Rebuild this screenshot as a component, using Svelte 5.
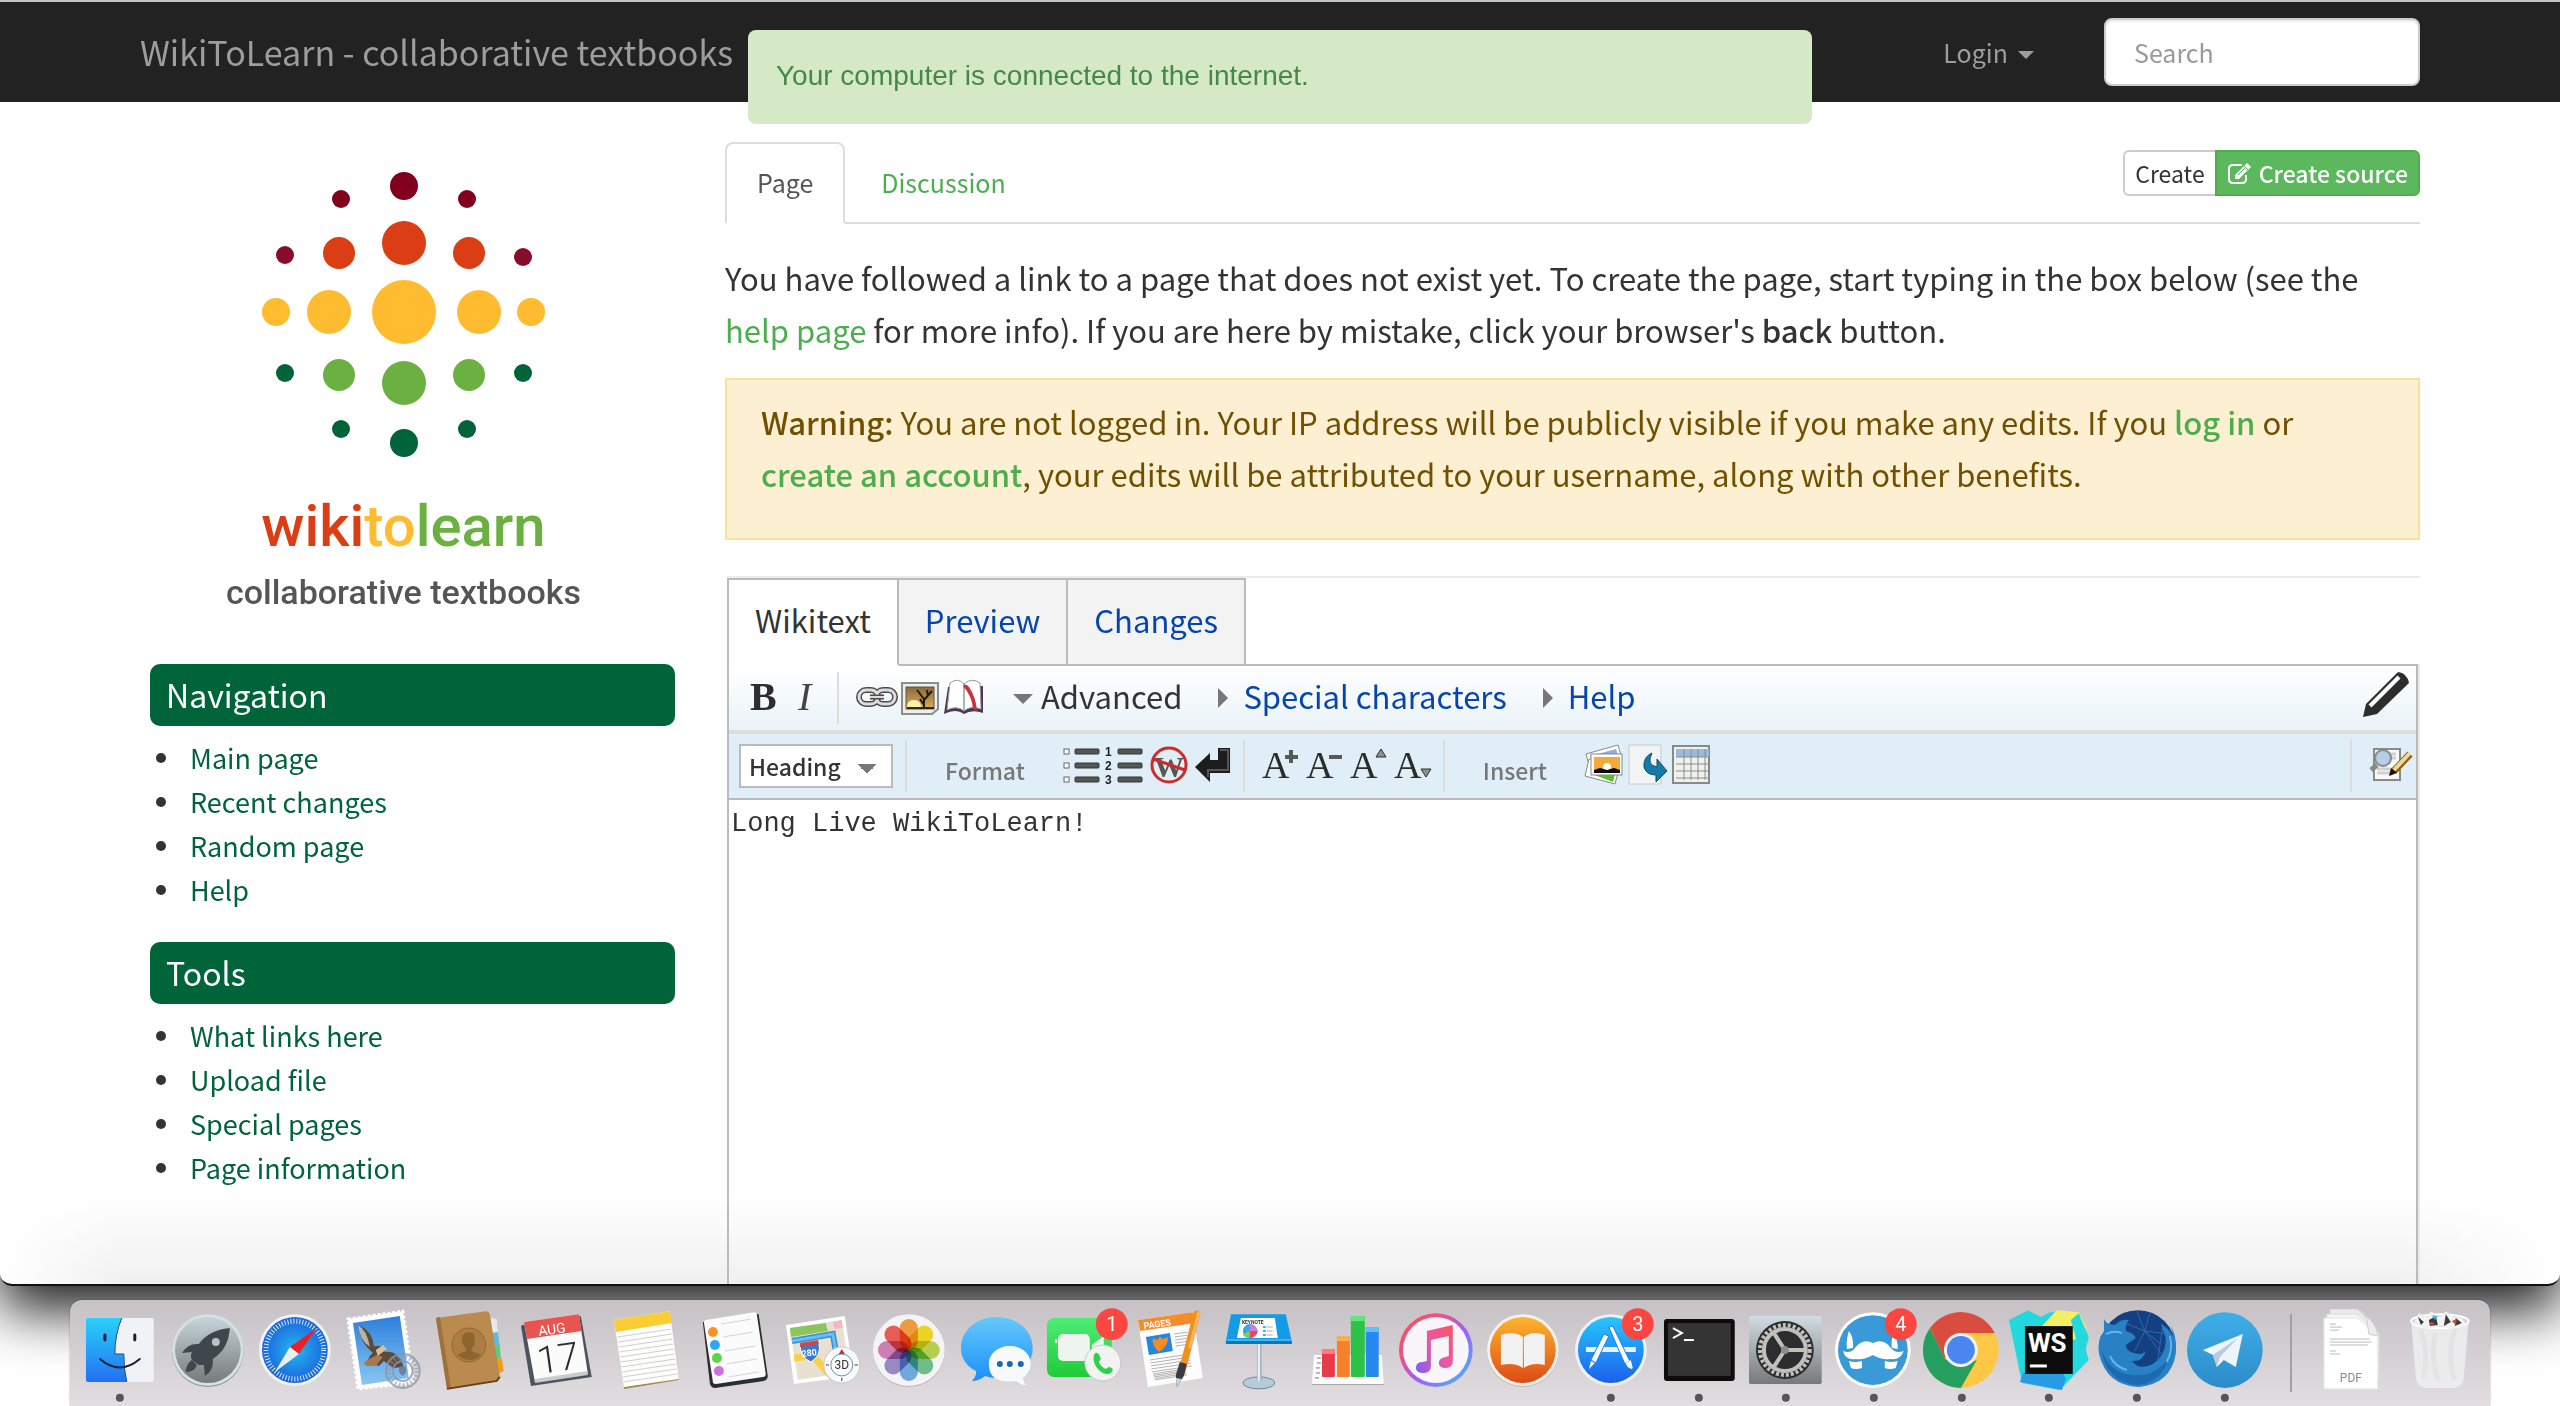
<script>
  const navLinks = ['Main page', 'Recent changes', 'Random page', 'Help'];
  const toolLinks = ['What links here', 'Upload file', 'Special pages', 'Page information'];

  const menus = [
    { title: 'Navigation', links: navLinks },
    { title: 'Tools', links: toolLinks }
  ];

  const dots = [
    { x: 403, y: 186, r: 14, c: '#80001d' },
    { x: 340, y: 199, r: 9, c: '#80001d' },
    { x: 466, y: 199, r: 9, c: '#80001d' },
    { x: 284, y: 255, r: 9, c: '#8a0c2b' },
    { x: 522, y: 257, r: 9, c: '#8a0c2b' },
    { x: 403, y: 243, r: 22, c: '#db3d14' },
    { x: 338, y: 253, r: 16, c: '#db3d14' },
    { x: 468, y: 253, r: 16, c: '#db3d14' },
    { x: 403, y: 312, r: 32, c: '#ffbc30' },
    { x: 328, y: 312, r: 22, c: '#ffbc30' },
    { x: 478, y: 312, r: 22, c: '#ffbc30' },
    { x: 275, y: 312, r: 14, c: '#ffbc30' },
    { x: 530, y: 312, r: 14, c: '#ffbc30' },
    { x: 403, y: 383, r: 22, c: '#6bb141' },
    { x: 338, y: 375, r: 16, c: '#6bb141' },
    { x: 468, y: 375, r: 16, c: '#6bb141' },
    { x: 284, y: 373, r: 9, c: '#00643b' },
    { x: 522, y: 373, r: 9, c: '#00643b' },
    { x: 340, y: 429, r: 9, c: '#00643b' },
    { x: 466, y: 429, r: 9, c: '#00643b' },
    { x: 403, y: 443, r: 14, c: '#00643b' }
  ];

  const petals = ['#f7931e', '#f5d800', '#b5d334', '#5cbf7b', '#5aa5e0', '#8d7cc3', '#cd6fae', '#f0453a'];

  let search = $state('');
  let wikitext = $state('Long Live WikiToLearn!');
</script>

{#snippet app(name, icon, running = false, badge = '')}
  <button class="app" aria-label={name}>
    <svg viewBox="0 0 88 106">
      {@render icon()}
      {#if badge}
        <circle cx="71" cy="24" r="16" fill="#fb4642" />
        <text x="71" y="31" font-size="20" fill="#fff" text-anchor="middle">{badge}</text>
      {/if}
      {#if running}
        <circle cx="44" cy="98" r="4" fill="#57545a" />
      {/if}
    </svg>
  </button>
{/snippet}

{#snippet finder()}
  <rect x="10" y="18" width="68" height="64" rx="2" fill="#f1f2f6" />
  <path d="M12 18H46Q39 34 39 54H48Q48 70 51 82H12a2 2 0 0 1-2-2V20a2 2 0 0 1 2-2z" fill="url(#finderBlue)" />
  <path d="M46 18Q39 34 39 54H48Q48 70 51 82" fill="none" stroke="#1a4f8c" stroke-width="1" />
  <path d="M29 35v5M59 35v5" stroke="#152238" stroke-width="3" stroke-linecap="round" />
  <path d="M24 59Q44 76 64 59" fill="none" stroke="#152238" stroke-width="2" stroke-linecap="round" />
{/snippet}

{#snippet launchpad()}
  <circle cx="44" cy="51" r="36" fill="#8b8e8e" />
  <circle cx="44" cy="50" r="36" fill="#d3e1e5" />
  <circle cx="44" cy="50" r="33" fill="url(#rocketBg)" />
  <path d="M66 28Q45 30 35 44Q24 43 18 53L28 52Q26 56 28 60L35 65L40 65L41 76Q50 71 49 59Q65 49 66 28z" fill="#3f464c" />
  <circle cx="52" cy="42" r="4" fill="#b7c2c6" />
  <path d="M28 60Q22 64 22 72Q31 72 33 65z" fill="#3f464c" />
{/snippet}

{#snippet safari()}
  <circle cx="44" cy="50" r="36" fill="#f2f3f5" />
  <circle cx="44" cy="50" r="33" fill="url(#safariBlue)" />
  <circle cx="44" cy="50" r="29" fill="none" stroke="#d9ecfb" stroke-width="5" stroke-dasharray="1 2" />
  <path d="M66 28L39 47l9 7z" fill="#e92029" />
  <path d="M24 72l15-25 9 7z" fill="#eceff2" />
{/snippet}

{#snippet mail()}
  <path d="M9 19l55-8 11 72-56 6z" fill="#fff" stroke="#fff" stroke-width="3" stroke-dasharray="3 2" />
  <path d="M14 23l47-7 9 62-47 7z" fill="url(#mailSky)" />
  <path d="M19 25Q33 30 35 46L43 46L46 52Q60 50 65 67L54 68L45 61L40 66L28 62L31 56L34 53Q21 43 19 25z" fill="#5e4a3b" />
  <path d="M19 25Q28 30 31 47Q21 41 19 25z" fill="#b9b2aa" />
  <path d="M25 62l13-7 6 2-7 9-10 0z" fill="#a77a4e" />
  <path d="M37 50l7-5 4 4-9 7z" fill="#d9bd9c" />
  <circle cx="64" cy="71" r="17" fill="none" stroke="#8c97a8" stroke-width="2" opacity=".8" />
  <circle cx="64" cy="71" r="10" fill="none" stroke="#8c97a8" stroke-width="2" opacity=".8" />
  <circle cx="64" cy="71" r="14" fill="none" stroke="#8c97a8" stroke-width="4" stroke-dasharray="2 2" opacity=".6" />
  <path d="M61 67q3-2 6 0q2 5-3 9q-6-4-3-9z" fill="#71809a" />
{/snippet}

{#snippet contacts()}
  <path d="M64 18l6 1 1 14-5 1z" fill="#e7e9ea" />
  <path d="M65 33l6-1 2 13-6 1z" fill="#63b8de" />
  <path d="M67 46l6-1 1 13-6 1z" fill="#55cf7b" />
  <path d="M69 59l6-1 2 13-6 3z" fill="#eb9f1d" />
  <path d="M9 18l50-7q3 0 4 3l10 62q0 4-3 5l-48 8q-2 0-2-2z" fill="#ba8a4f" />
  <path d="M9 18l4-1 11 71-4 1z" fill="#9d713b" />
  <path d="M20 89l50-8 3-4" fill="none" stroke="#654018" stroke-width="2" />
  <circle cx="42" cy="45" r="17" fill="#ab7d43" stroke="#926833" stroke-width="1" />
  <path d="M42 32q6 0 6 7t-3 9v3l9 4q-10 10-24 0l9-4v-3q-4-3-4-9t7-7z" fill="#8f652f" />
{/snippet}

{#snippet calendar()}
  <path d="M6 26l6-3 54-7 11 61-61 9z" fill="#4b545e" />
  <path d="M9 22l55-8 9 59-53 9z" fill="#fbfbfb" />
  <path d="M9 22l55-8 3 17-55 8z" fill="#e85450" />
  <path d="M20 79l53-8v4l-53 8z" fill="#c9cccf" />
  <text x="24" y="36" font-size="14" fill="#fff" transform="rotate(-8 24 36)">AUG</text>
  <text x="24" y="74" font-size="38" font-weight="300" fill="#2c2c2c" transform="rotate(-8 24 74)">17</text>
{/snippet}

{#snippet notes()}
  <path d="M22 87l55-9v2l-55 9z" fill="#9e8a4a" />
  <path d="M12 20l56-9 9 68-55 8z" fill="#fdfdfb" />
  <path d="M12 20l56-9 2 12-56 9z" fill="#fbcd34" />
  {#each [37, 42, 47, 52, 57, 62, 67, 72, 77, 82] as y}
    <path d="M{10 + y / 7} {y}l54-8" stroke="#cfcfcf" stroke-width="1" />
  {/each}
{/snippet}

{#snippet reminders()}
  <path d="M14 23l54-8 9 61q0 3-3 4l-49 7q-3 0-4-3z" fill="#2b2e32" stroke="#2b2e32" stroke-width="2" />
  <path d="M16 20l48-8q3 0 3 2l9 60q0 3-3 3l-47 7q-3 0-3-2l-9-59q0-3 2-3z" fill="#fbfbfb" />
  <circle cx="23" cy="32" r="5" fill="#fc9226" />
  <circle cx="25" cy="45" r="5" fill="#29a8f5" />
  <circle cx="27" cy="58" r="5" fill="#5fd441" />
  <circle cx="29" cy="71" r="5" fill="#cb71e0" />
  <path d="M31 24l30-5M33 37l30-5M35 51l30-5M37 64l30-5M39 77l30-5" stroke="#d4d4d6" stroke-width="1" />
{/snippet}

{#snippet maps()}
  <path d="M8 25l59-9 9 60-60 8z" fill="#fff" />
  <path d="M12 28l52-8 8 52-52 8z" fill="#e8e0d0" />
  <path d="M12 28l36-5 2 8-37 6z" fill="#8ac65c" />
  <path d="M55 22l9-2 1 8-8 1z" fill="#efb8c3" />
  <path d="M14 41l41-7 8 45" fill="none" stroke="#3b8fd0" stroke-width="6" />
  <path d="M14 41l41-7 8 45" fill="none" stroke="#65c1f5" stroke-width="3" />
  <path d="M16 58l19-2 20 22" fill="none" stroke="#f9d046" stroke-width="7" />
  <path d="M22 45l19-3q3 14-8 20-10-4-11-17z" fill="#3b79cf" stroke="#fff" stroke-width="1" />
  <path d="M22 47l19-3-1-4-18 3z" fill="#d34549" />
  <text x="24" y="57" font-size="9" font-weight="700" fill="#fff" transform="rotate(-7 24 57)">280</text>
  <circle cx="64" cy="65" r="18" fill="#fafafa" stroke="#c9c9c9" stroke-width="1" />
  <circle cx="64" cy="65" r="11" fill="none" stroke="#5d9ab6" stroke-width="1" />
  <path d="M64 49l3 5h-6z" fill="#de2a1f" />
  <path d="M64 78v3M48 65h3M77 65h3" stroke="#333" stroke-width="1" />
  <text x="64" y="69" font-size="12" fill="#333" text-anchor="middle">3D</text>
{/snippet}

{#snippet photos()}
  <circle cx="44" cy="51" r="36" fill="#b9b6b8" />
  <circle cx="44" cy="50" r="36" fill="#f4f3f5" />
  {#each petals as color, i}
    <rect class="petal" x="35" y="19" width="18" height="31" rx="9" fill={color} opacity=".85" transform="rotate({i * 45} 44 50)" />
  {/each}
{/snippet}

{#snippet messages()}
  <path d="M44 17c20 0 36 13 36 31S64 78 44 78q-7 0-12-2-6 5-13 5 5-5 4-10C13 66 8 58 8 48c0-18 16-31 36-31z" fill="url(#msgBlue)" />
  <path d="M57 46c12 0 21 8 21 18q0 8-8 14 1 4 3 7-6 0-9-4-28 4-28-17c0-10 9-18 21-18z" fill="#f7f9fb" />
  <circle cx="47" cy="64" r="3" fill="#1769ae" />
  <circle cx="57" cy="64" r="3" fill="#1769ae" />
  <circle cx="68" cy="64" r="3" fill="#1769ae" />
{/snippet}

{#snippet facetime()}
  <rect x="6" y="18" width="65" height="59" rx="7" fill="url(#ftGreen)" />
  <rect x="17" y="34" width="32" height="27" rx="5" fill="#eef4ee" />
  <path d="M51 45l12-9v23l-12-8z" fill="#eef4ee" />
  <path d="M15 39v4" stroke="#eef4ee" stroke-width="2" />
  <circle cx="62" cy="63" r="18" fill="#f0f3ef" stroke="#c5ccc5" stroke-width="1" />
  <path d="M53 55q3-5 6 1l1 3-2 3q2 5 7 7l3-2q6 1 3 5-5 5-12-1-8-7-6-16z" fill="#30cf4e" />
{/snippet}

{#snippet pages()}
  <path d="M10 20l55-8 10 66-55 9z" fill="#fdfdfd" />
  <path d="M10 20l55-8 2 11-55 8z" fill="#f68b29" />
  <text x="16" y="29" font-size="9" font-weight="700" fill="#fff" transform="rotate(-8 16 29)">PAGES</text>
  <path d="M18 37l24-4 3 18-24 4z" fill="#2487dd" />
  <path d="M31 52q-8-7-6-14l4 2 3-3 3 2 5-2q1 9-9 15z" fill="#f78b20" />
  {#each [0, 3, 6, 9, 12] as y}
    <path d="M{46 + y / 6} {34 + y}l14-2M{22 + y / 6} {60 + y}l40-6M{25 + y / 6} {74 + y / 2}l32-5" stroke="#b4b4b4" stroke-width="1" />
  {/each}
  <path d="M69 14L54 72" stroke="#f0901f" stroke-width="7" stroke-linecap="round" />
  <path d="M71 13L62 47" stroke="#f9b65f" stroke-width="3" stroke-linecap="round" />
  <path d="M59 64l-7-2-4 13 1 12 7-11z" fill="#3a3c40" />
  <path d="M48 78l1 9 5-8z" fill="#c4d5df" />
{/snippet}

{#snippet keynote()}
  <ellipse cx="43" cy="83" rx="16" ry="6" fill="#b8cbdb" stroke="#6f8698" stroke-width="1" />
  <path d="M41 44h5v37h-5z" fill="#a9bac8" />
  <path d="M42 44h2v37h-2z" fill="#edf3f7" />
  <path d="M15 14h55l6 27v3H10v-3z" fill="#149be8" />
  <path d="M10 41h66v3H10z" fill="#0b76b9" />
  <path d="M11 40h64" stroke="#6dd6fa" stroke-width="1" />
  <path d="M25 18h34l3 20H21z" fill="#fff" />
  <text x="26" y="24" font-size="5" font-weight="700" fill="#333">KEYNOTE</text>
  <circle cx="34" cy="31" r="7" fill="#34a6e8" />
  <path d="M34 31v-7q6 0 8 7z" fill="#c77ddb" />
  <path d="M34 31h8q-1 6-8 7z" fill="#ef445c" />
  <path d="M34 31v7q-6 0-7-4z" fill="#7fce50" />
  <path d="M47 27h3M47 31h3M47 35h3" stroke="#44b6c6" stroke-width="2" />
  <path d="M51 27h6M51 31h6M51 35h6" stroke="#d6d6d6" stroke-width="2" />
{/snippet}

{#snippet numbers()}
  <path d="M10 55h68l2 29H8z" fill="#fcfcfc" />
  <path d="M8 84h72v1H8z" fill="#aaa" />
  <path d="M13 58h4M13 63h4M12 68h4M12 73h4M11 78h4" stroke="#777" stroke-width="1" />
  <rect x="18" y="49" width="13" height="28" rx="1" fill="#e83a4d" />
  <rect x="18" y="49" width="13" height="5" fill="#fb7d80" />
  <rect x="33" y="36" width="13" height="41" rx="1" fill="#f5812a" />
  <rect x="33" y="36" width="13" height="5" fill="#fcae51" />
  <rect x="47" y="16" width="14" height="61" rx="1" fill="#2cc246" />
  <rect x="47" y="16" width="14" height="5" fill="#62e57f" />
  <rect x="62" y="27" width="13" height="50" rx="1" fill="#2589ef" />
  <rect x="62" y="27" width="13" height="5" fill="#5ec2fb" />
{/snippet}

{#snippet itunes()}
  <circle cx="44" cy="50" r="37" fill="url(#tunesRing)" />
  <circle cx="44" cy="50" r="33" fill="#f8f6fa" />
  <path d="M35 31l26-6v36q0 7-7 7-7 0-7-5 0-5 7-6l3-1V36l-18 4v26q0 7-7 7-8 0-8-5 0-6 7-6l4-1z" fill="url(#tunesNote)" />
{/snippet}

{#snippet ibooks()}
  <circle cx="44" cy="51" r="36" fill="#c6b6ae" />
  <circle cx="44" cy="50" r="36" fill="#f3f1f0" />
  <circle cx="44" cy="50" r="33" fill="url(#booksBg)" />
  <path d="M22 35q13-5 22 2v31q-8-6-22-3zM66 35q-13-5-21 2v31q8-6 21-3z" fill="#f2f2f3" />
{/snippet}

{#snippet appstore()}
  <circle cx="44" cy="50" r="36" fill="#eef2f6" />
  <circle cx="44" cy="50" r="33" fill="url(#storeBlue)" />
  <path d="M19 47h50v5H19z" fill="#eaf2fb" />
  <path d="M42 27l4-1 17 35-5 3z" fill="#f7fafd" stroke="#1c7df0" stroke-width="1" />
  <path d="M59 63l5-3 2 8-1 1q-5-1-6-6z" fill="#f7fafd" />
  <path d="M37 34l5 2-13 27-5-3z" fill="#f7fafd" stroke="#1c7df0" stroke-width="1" />
  <path d="M24 61l4 2-6 6z" fill="#f7fafd" />
{/snippet}

{#snippet terminal()}
  <rect x="9" y="19" width="71" height="62" rx="3" fill="#0c0c0c" />
  <rect x="13" y="23" width="63" height="53" fill="#343434" />
  <path d="M18 28l9 5-9 5" fill="none" stroke="#fff" stroke-width="2" />
  <path d="M29 40h10" stroke="#fff" stroke-width="2" />
{/snippet}

{#snippet preferences()}
  <rect x="7" y="16" width="73" height="68" rx="2" fill="url(#prefBg)" />
  <circle cx="43" cy="50" r="29" fill="#2c2d2e" />
  <circle cx="43" cy="50" r="25" fill="none" stroke="#c2c0bc" stroke-width="4" stroke-dasharray="3 2" />
  <circle cx="43" cy="50" r="21" fill="none" stroke="#c2c0bc" stroke-width="4" />
  <path d="M43 50h20M43 50L32 33M43 50L32 67" stroke="#c2c0bc" stroke-width="4" />
  <circle cx="43" cy="50" r="4" fill="#8e8c8a" />
{/snippet}

{#snippet franz()}
  <circle cx="43" cy="50" r="38" fill="#fff" />
  <circle cx="43" cy="50" r="35" fill="#3a9ad8" />
  <path d="M19 31q5 7 4 17l-6 1q-1-9 2-18zM64 33q4 7 4 16l-6-1q-1-8 2-15z" fill="#fff" />
  <path d="M13 51q8 3 12-3 8-10 18-5 11-5 18 5 5 6 13 3-4 10-14 8-9 1-17-4-8 5-17 4-10 2-13-8z" fill="#fff" />
  <path d="M19 61q6 2 13 0v7q-6 2-11 0zM55 61q6 2 13 0l-2 7q-6 2-11 0z" fill="#fff" />
{/snippet}

{#snippet chrome()}
  <circle cx="43" cy="50" r="38" fill="#fec846" />
  <path d="M12 28a38 38 0 0 1 65 5H43L27 59z" fill="#da4c40" />
  <path d="M12 28a38 38 0 0 0 31 60l16-28-16 7-16-8z" fill="#249f5d" />
  <circle cx="43" cy="50" r="17" fill="#f2f2f2" />
  <circle cx="43" cy="50" r="14" fill="#4b86f0" />
{/snippet}

{#snippet webstorm()}
  <path d="M4 20l19-10 13 7 9-5 28 0 11 26-3 11 3 11-25 26-4 4-38-7z" fill="#23d9dd" />
  <path d="M18 73h40l3 6-4 11-42-8z" fill="#279be4" />
  <path d="M36 27l16-17 22 2 8 16-12 12z" fill="#f7ef63" />
  <path d="M66 20l8-7 10 24-11 8z" fill="#23d9dd" />
  <rect x="20" y="26" width="48" height="48" fill="#0d0d0e" />
  <text x="23" y="52" font-size="26" font-weight="700" fill="#fff">WS</text>
  <path d="M25 66h17" stroke="#fff" stroke-width="3" />
{/snippet}

{#snippet firefox()}
  <circle cx="45" cy="48" r="38" fill="#143f80" />
  <path d="M44 11l8 20 15 12M57 13l-5 18-10 20M30 22l22 9 26 3M52 31l18 25M70 25l-6 43" stroke="#2a6aae" stroke-width="1" fill="none" />
  <path d="M11 19Q14 25 22 25Q29 18 36 20Q32 25 33 31Q41 33 43 38L33 45Q33 51 41 53Q49 56 53 51Q50 62 39 61Q47 71 60 64Q73 56 73 38L68 24Q76 28 80 36Q81 31 76 23Q85 34 83 54Q78 84 46 87Q14 86 6 54Q4 38 11 32z" fill="#2880c5" />
  <path d="M8 48Q15 72 38 75Q62 78 76 58Q68 84 44 85Q13 82 8 48z" fill="#1c69b0" />
  <path d="M13 34Q21 30 29 33M74 62Q81 49 77 36M17 56Q22 67 34 70" stroke="#63b4e8" stroke-width="2" fill="none" />
{/snippet}

{#snippet telegram()}
  <circle cx="44" cy="50" r="38" fill="url(#tgBlue)" />
  <path d="M62 34L22 50l10 5 4 12 7-7 12 7z" fill="#eff4f9" />
  <path d="M32 55l25-17-18 19-3 10z" fill="#b6cbdd" />
{/snippet}

{#snippet pdf()}
  <path d="M21 9h29l20 24v46H21z" fill="#e9e9e9" />
  <path d="M18 14h30l22 20v45H18z" fill="#f6f6f6" stroke="#dedede" stroke-width="1" />
  <path d="M15 18h34l20 18v53H15z" fill="#fff" stroke="#e4e4e4" stroke-width="1" />
  <path d="M48 9q8 2 10 10l2 15 9 2q0-14-21-27z" fill="#ededed" stroke="#cfcfcf" stroke-width="1" />
  <path d="M21 24h6M21 27h12M21 30h9M21 39h40M21 42h42M21 45h38M21 51h6M21 54h10" stroke="#bcbcbc" stroke-width="1" />
  <text x="42" y="82" font-size="12" fill="#8a8a8a" text-anchor="middle">PDF</text>
{/snippet}

{#snippet trash()}
  <path d="M15 20h58l-5 58q-1 10-12 10H32q-11 0-12-10z" fill="#ededee" opacity=".9" />
  <path d="M24 29q9 18 4 50M40 33q-6 20 2 48M60 28q-9 20-2 52" fill="none" stroke="#dedede" stroke-width="5" opacity=".6" />
  <ellipse cx="44" cy="21" rx="29" ry="7" fill="#d5d5d6" stroke="#fff" stroke-width="2" />
  <path d="M18 22l5-9 9 4 3-6 9 6 6-6 8 6 8 1 4 7-14 4-12-3-14 3z" fill="#f2f2f2" />
  <path d="M22 17l6 5-3 3zM33 20l7-4 2 9-8 1zM50 14l5 8-7 4zM60 18l6 5-7 3z" fill="#3c3a40" />
  <path d="M36 15l6 1-3 4z" fill="#35b9dd" />
  <path d="M56 21l5-2-1 6zM34 22l5 1-4 3z" fill="#c4502f" />
{/snippet}

<svg class="defs" aria-hidden="true">
  <defs>
    <linearGradient id="finderBlue" x2="0" y2="1"><stop stop-color="#2bd0fb" /><stop offset="1" stop-color="#2270f2" /></linearGradient>
    <linearGradient id="rocketBg" x2="0" y2="1"><stop stop-color="#c6d4d9" /><stop offset="1" stop-color="#777a78" /></linearGradient>
    <radialGradient id="safariBlue"><stop stop-color="#25b8f0" /><stop offset="1" stop-color="#1b63dd" /></radialGradient>
    <linearGradient id="mailSky" x2="0" y2="1"><stop stop-color="#2d7fdd" /><stop offset="1" stop-color="#8ac7f1" /></linearGradient>
    <linearGradient id="msgBlue" x2="0" y2="1"><stop stop-color="#65c9fa" /><stop offset="1" stop-color="#1b90fb" /></linearGradient>
    <linearGradient id="ftGreen" x2="0" y2="1"><stop stop-color="#4eec76" /><stop offset="1" stop-color="#1fcb38" /></linearGradient>
    <linearGradient id="tunesRing" x2="1" y2="1"><stop stop-color="#fb4c58" /><stop offset=".3" stop-color="#f0527c" /><stop offset=".55" stop-color="#a55bf3" /><stop offset="1" stop-color="#34c6f5" /></linearGradient>
    <linearGradient id="tunesNote" x1="1" x2="0" y2="1"><stop stop-color="#fb5560" /><stop offset=".5" stop-color="#e957a9" /><stop offset="1" stop-color="#7a62f5" /></linearGradient>
    <linearGradient id="booksBg" x2="0" y2="1"><stop stop-color="#fdb52e" /><stop offset="1" stop-color="#de4a14" /></linearGradient>
    <linearGradient id="storeBlue" x2="0" y2="1"><stop stop-color="#27c6fb" /><stop offset="1" stop-color="#1c60ee" /></linearGradient>
    <linearGradient id="prefBg" x2="0" y2="1"><stop stop-color="#cfdde2" /><stop offset="1" stop-color="#777979" /></linearGradient>
    <linearGradient id="tgBlue" x2="0" y2="1"><stop stop-color="#3faee8" /><stop offset="1" stop-color="#2c8cc9" /></linearGradient>
    <linearGradient id="sunset" x2="0" y2="1"><stop stop-color="#8a6b3a" /><stop offset="1" stop-color="#e5a95a" /></linearGradient>
  </defs>
</svg>

<div class="screen">
  <div class="window">
    <header class="navbar">
      <div class="container navbar-inner">
        <a class="brand" href="#home">WikiToLearn - collaborative textbooks</a>
        <div class="alert" role="status">Your computer is connected to the internet.</div>
        <button class="login">Login <span class="caret"></span></button>
        <input class="search" type="search" placeholder="Search" aria-label="Search" bind:value={search} />
      </div>
    </header>

    <div class="container layout">
      <aside class="sidebar">
        <a class="logo" href="#home">
          <svg viewBox="259 170 288 288" aria-hidden="true">
            {#each dots as d}
              <circle cx={d.x} cy={d.y} r={d.r} fill={d.c} />
            {/each}
          </svg>
          <span class="logo-name"><span class="wiki">wiki</span><span class="to">to</span><span class="learn">learn</span></span>
          <span class="logo-sub">collaborative textbooks</span>
        </a>
        {#each menus as menu}
          <nav class="menu">
            <h3>{menu.title}</h3>
            <ul>
              {#each menu.links as link}
                <li><a href="#{link}">{link}</a></li>
              {/each}
            </ul>
          </nav>
        {/each}
      </aside>

      <main class="content">
        <div class="page-tabs">
          <a class="tab active" href="#page">Page</a>
          <a class="tab" href="#discussion">Discussion</a>
          <div class="actions">
            <button class="create">Create</button>
            <button class="create-source">
              <svg viewBox="0 0 26 24" aria-hidden="true">
                <path d="M19 14v4q0 4-4 4H6q-4 0-4-4V8q0-4 4-4h9" fill="none" stroke="#fff" stroke-width="2" />
                <path d="M20 2l4 4-12 12H8v-4z" fill="#fff" />
                <path d="M17 5l4 4M11 14l7-7" stroke="#5cb85c" stroke-width="1" />
              </svg>
              Create source
            </button>
          </div>
        </div>

        <p class="intro">
          You have followed a link to a page that does not exist yet. To create the page, start typing in the box below (see the
          <a href="#help">help page</a> for more info). If you are here by mistake, click your browser's <b>back</b> button.
        </p>

        <div class="warning">
          <b>Warning:</b> You are not logged in. Your IP address will be publicly visible if you make any edits. If you
          <a href="#login">log in</a> or <a href="#signup">create an account</a>, your edits will be attributed to your
          username, along with other benefits.
        </div>

        <div class="editor">
          <div class="edit-tabs">
            <a class="active" href="#wikitext">Wikitext</a>
            <a href="#preview">Preview</a>
            <a href="#changes">Changes</a>
          </div>

          <div class="edit-body">
            <div class="toolbar">
              <div class="group">
                <button aria-label="Bold">
                  <svg viewBox="0 0 44 44"><text class="serif" x="7" y="34" font-size="40" font-weight="700" fill="#2e2e2e">B</text></svg>
                </button>
                <button aria-label="Italic">
                  <svg viewBox="0 0 44 44"><text class="serif" x="11" y="34" font-size="40" font-style="italic" fill="#444">I</text></svg>
                </button>
              </div>
              <div class="group links">
                <button aria-label="Link">
                  <svg viewBox="0 0 44 44">
                    <g fill="none">
                      <rect x="4" y="14" width="19" height="14" rx="7" stroke="#4b4b4b" stroke-width="6" />
                      <rect x="21" y="14" width="19" height="14" rx="7" stroke="#4b4b4b" stroke-width="6" />
                      <rect x="4" y="14" width="19" height="14" rx="7" stroke="#dcdcdc" stroke-width="3" />
                      <rect x="21" y="14" width="19" height="14" rx="7" stroke="#dcdcdc" stroke-width="3" />
                      <path d="M15 21h14" stroke="#4b4b4b" stroke-width="5" />
                      <path d="M15 21h14" stroke="#dcdcdc" stroke-width="2" />
                    </g>
                  </svg>
                </button>
                <button aria-label="Embedded file">
                  <svg viewBox="0 0 44 44">
                    <path d="M3 7h36v26l-6 5H3z" fill="#eeeeec" stroke="#8b8e88" stroke-width="2" />
                    <rect x="7" y="11" width="28" height="22" fill="url(#sunset)" stroke="#55574f" stroke-width="1" />
                    <path d="M8 32q0-8 7-8t7 8z" fill="#fff3b0" />
                    <path d="M25 33V23l-7-9M25 24l8-9M25 29l-4-6M29 20l-1-6" fill="none" stroke="#17200f" stroke-width="2" />
                    <path d="M8 32h27" stroke="#243015" stroke-width="2" />
                  </svg>
                </button>
                <button aria-label="Reference">
                  <svg viewBox="0 0 44 44">
                    <path d="M5 11L1 38q12-6 20 0 8-5 19-1V10z" fill="#51344e" />
                    <path d="M7 7q8-6 14 1v27q-7-6-17-1zM21 8q8-7 16-1l1 26q-10-4-17 2z" fill="#fff" stroke="#999" stroke-width="1" />
                    <path d="M20 10Q23 7 26 11Q33 21 34 35L30 33Q29 20 20 10z" fill="#c8343b" />
                  </svg>
                </button>
              </div>
              <button class="section open"><span class="arrow-down"></span>Advanced</button>
              <button class="section"><span class="arrow-right"></span>Special characters</button>
              <button class="section"><span class="arrow-right"></span>Help</button>
              <button class="switch" aria-label="Switch editor">
                <svg viewBox="0 0 48 48">
                  <path d="M36 1q9 1 11 11L15 43 1 46l3-13z" fill="#2d2d2d" />
                  <path d="M8 35L37 6" stroke="#fff" stroke-width="4" />
                </svg>
              </button>
            </div>

            <div class="toolbar advanced">
              <div class="group heading-group">
                <select aria-label="Heading">
                  <option>Heading</option>
                  <option>Level 2</option>
                  <option>Level 3</option>
                </select>
              </div>
              <div class="group">
                <span class="label">Format</span>
                <button aria-label="Bulleted list">
                  <svg viewBox="0 0 44 44">
                    {#each [5, 19, 33] as y}
                      <rect x="3" y={y} width="5" height="5" fill="#fff" stroke="#666" stroke-width="1" />
                      <rect x="14" y={y} width="24" height="5" rx="1" fill="#555753" stroke="#2e3436" stroke-width="1" />
                    {/each}
                  </svg>
                </button>
                <button aria-label="Numbered list">
                  <svg viewBox="0 0 44 44">
                    {#each [1, 2, 3] as n}
                      <text class="num" x="0" y={n * 14 - 2} font-size="12" font-weight="700" fill="#222">{n}</text>
                      <rect x="13" y={n * 14 - 9} width="24" height="5" rx="1" fill="#555753" stroke="#2e3436" stroke-width="1" />
                    {/each}
                  </svg>
                </button>
                <button aria-label="No wiki formatting">
                  <svg viewBox="0 0 44 44">
                    <text class="serif" x="5" y="33" font-size="30" font-weight="700" fill="#555753">W</text>
                    <circle cx="20" cy="21" r="17" fill="none" stroke="#cc2c2c" stroke-width="3" />
                    <path d="M4 15l32 11" stroke="#cc2c2c" stroke-width="3" />
                  </svg>
                </button>
                <button aria-label="New line">
                  <svg viewBox="0 0 44 44">
                    <path d="M25 4h12v25H17v9L2 23 17 9v7h8z" fill="#1d1d1d" />
                    <path d="M27 6h8v20H15v7" fill="none" stroke="#555" stroke-width="2" />
                  </svg>
                </button>
              </div>
              <div class="group">
                <button aria-label="Big">
                  <svg viewBox="0 0 44 44"><text class="serif" x="1" y="34" font-size="38" fill="#2a2d29">A</text><path d="M30 6v13M24 13h13" stroke="#555b57" stroke-width="4" /></svg>
                </button>
                <button aria-label="Small">
                  <svg viewBox="0 0 44 44"><text class="serif" x="1" y="34" font-size="38" fill="#2a2d29">A</text><path d="M24 13h13" stroke="#555b57" stroke-width="4" /></svg>
                </button>
                <button aria-label="Superscript">
                  <svg viewBox="0 0 44 44"><text class="serif" x="1" y="34" font-size="38" fill="#2a2d29">A</text><path d="M32 5l5 8H27z" fill="#8d948f" stroke="#2a2d29" stroke-width="1" /></svg>
                </button>
                <button aria-label="Subscript">
                  <svg viewBox="0 0 44 44"><text class="serif" x="1" y="34" font-size="38" fill="#2a2d29">A</text><path d="M33 33l5-8H28z" fill="#8d948f" stroke="#2a2d29" stroke-width="1" /></svg>
                </button>
              </div>
              <div class="group last">
                <span class="label">Insert</span>
                <button aria-label="Picture gallery">
                  <svg viewBox="0 0 44 44">
                    <path d="M3 10l32-9 4 14-32 9z" fill="#fff" stroke="#888a85" stroke-width="1" />
                    <path d="M7 12l26-7 3 9-26 7z" fill="#8fb0d8" />
                    <path d="M6 15L2 32l30 8 6-22z" fill="#fff" stroke="#888a85" stroke-width="1" />
                    <path d="M9 30l3-4h21l-3 12z" fill="#59bd28" />
                    <rect x="8" y="10" width="31" height="21" fill="#fff" stroke="#888a85" stroke-width="1" />
                    <rect x="11" y="13" width="26" height="16" fill="#f3aa3b" />
                    <circle cx="24" cy="23" r="4" fill="#fff" />
                    <path d="M11 29v-3l6-2 7 2 7-2 6 2v3z" fill="#080808" />
                  </svg>
                </button>
                <button aria-label="Redirect">
                  <svg viewBox="0 0 44 44">
                    <path d="M2 1h32v39H2z" fill="#f2f3f3" stroke="#c7cacc" stroke-width="1" />
                    <path d="M25 9q-9 4-8 14 2 8 12 8v7l11-11-10-12v8q-11-2-5-14z" fill="#157aa8" stroke="#0b4f70" stroke-width="1" />
                  </svg>
                </button>
                <button aria-label="Table">
                  <svg viewBox="0 0 44 44">
                    <rect x="2" y="2" width="36" height="37" fill="#f0f1ee" stroke="#888a85" stroke-width="2" />
                    <rect x="5" y="5" width="33" height="8" fill="#9bb9da" />
                    <path d="M5 13h33M5 20h33M5 27h33M5 34h33M13 5v31M20 5v31M27 5v31M34 5v31" stroke="#8b8d88" stroke-width="1" />
                  </svg>
                </button>
              </div>
              <div class="group find">
                <button aria-label="Search and replace">
                  <svg viewBox="0 0 44 44">
                    <rect x="6" y="5" width="26" height="31" fill="#f8f8f8" stroke="#888a85" stroke-width="2" />
                    <path d="M22 10h6M22 14h6M9 25h20M9 29h14" stroke="#d0d0d0" stroke-width="3" />
                    <path d="M9 21l-6 5" stroke="#888a85" stroke-width="5" />
                    <circle cx="15" cy="14" r="8" fill="#b4cdec" stroke="#888a85" stroke-width="2" />
                    <path d="M42 10L26 27" stroke="#8f5f0b" stroke-width="7" />
                    <path d="M42 9L26 26" stroke="#ead9a0" stroke-width="4" />
                    <path d="M23 24l6 5-8 3z" fill="#1b1200" />
                  </svg>
                </button>
              </div>
            </div>

            <textarea aria-label="Wikitext source" spellcheck="false" bind:value={wikitext}></textarea>
          </div>
        </div>
      </main>
    </div>
  </div>

  <footer class="dock">
    {@render app('Finder', finder, true)}
    {@render app('Launchpad', launchpad)}
    {@render app('Safari', safari)}
    {@render app('Mail', mail)}
    {@render app('Contacts', contacts)}
    {@render app('Calendar', calendar)}
    {@render app('Notes', notes)}
    {@render app('Reminders', reminders)}
    {@render app('Maps', maps)}
    {@render app('Photos', photos)}
    {@render app('Messages', messages)}
    {@render app('FaceTime', facetime, false, '1')}
    {@render app('Pages', pages)}
    {@render app('Keynote', keynote)}
    {@render app('Numbers', numbers)}
    {@render app('iTunes', itunes)}
    {@render app('iBooks', ibooks)}
    {@render app('App Store', appstore, true, '3')}
    {@render app('Terminal', terminal, true)}
    {@render app('System Preferences', preferences, true)}
    {@render app('Franz', franz, true, '4')}
    {@render app('Chrome', chrome, true)}
    {@render app('WebStorm', webstorm, true)}
    {@render app('Firefox', firefox, true)}
    {@render app('Telegram', telegram, true)}
    <span class="divider"></span>
    {@render app('PDF document', pdf)}
    {@render app('Trash', trash)}
  </footer>
</div>

<style>
  :global(body) {
    margin: 0;
    background: #fff;
  }

  .screen {
    display: flex;
    flex-direction: column;
    height: 100vh;
    overflow: hidden;
    font-family: 'Noto Sans CJK SC', 'Open Sans', sans-serif;
    font-size: 31px;
    line-height: 52px;
    color: #333;
  }

  .screen * {
    box-sizing: border-box;
  }

  .defs {
    position: absolute;
    width: 0;
    height: 0;
  }

  a {
    color: #4cae4c;
    text-decoration: none;
  }

  button {
    padding: 0;
    border: 0;
    background: none;
    font: inherit;
    color: inherit;
    cursor: pointer;
  }

  svg {
    display: block;
  }

  b {
    font-weight: 500;
  }

  .window {
    flex: 1;
    min-height: 0;
    display: flex;
    flex-direction: column;
    overflow: hidden;
    border-top: 2px solid #c1c5c8;
    border-bottom: 2px solid #111;
    border-radius: 0 0 12px 12px;
    background:
      linear-gradient(to right, #fff, transparent 120px, transparent calc(100% - 160px), #fff),
      linear-gradient(to bottom, #fff calc(100% - 90px), #f0f0f0);
    box-shadow: 0 24px 56px rgba(0, 0, 0, 0.9);
  }

  .container {
    width: 100%;
    max-width: 2340px;
    margin: 0 auto;
    padding: 0 30px;
  }

  .navbar {
    background: #222;
  }

  .navbar-inner {
    position: relative;
    display: flex;
    align-items: center;
    height: 100px;
  }

  .brand {
    color: #9d9d9d;
    font-size: 34px;
  }

  .alert {
    position: absolute;
    top: 28px;
    left: 638px;
    right: 638px;
    height: 94px;
    padding: 20px 28px;
    border-radius: 8px;
    background: #d5e9c6;
    color: #468847;
    font-family: 'Liberation Sans', Arial, sans-serif;
    font-size: 28px;
  }

  .login {
    display: flex;
    align-items: center;
    gap: 10px;
    margin-left: auto;
    margin-right: 70px;
    color: #9d9d9d;
    font-size: 25px;
  }

  .caret {
    margin-top: 6px;
    border: 8px solid transparent;
    border-top-color: #9d9d9d;
    border-bottom: 0;
  }

  .search {
    width: 316px;
    height: 68px;
    padding: 0 28px;
    border: 2px solid #ccc;
    border-radius: 8px;
    background: #fff;
    box-shadow: inset 0 2px 2px rgba(0, 0, 0, 0.08);
    font: inherit;
    font-size: 25px;
    color: #333;
    outline: none;
  }

  .search::placeholder {
    color: #999;
    opacity: 1;
  }

  .layout {
    flex: 1;
    min-height: 0;
    display: grid;
    grid-template-columns: calc(25% - 45px) 1fr;
    gap: 60px;
  }

  .sidebar {
    padding-left: 10px;
    margin-right: -10px;
  }

  .logo {
    display: flex;
    flex-direction: column;
    align-items: center;
    height: 562px;
    padding: 68px 18px 0 0;
    font-family: Roboto, sans-serif;
    font-weight: 500;
  }

  .logo svg {
    width: 288px;
    height: 288px;
  }

  .logo-name {
    margin-top: 32px;
    font-size: 58px;
    line-height: 72px;
  }

  .wiki {
    color: #db3d14;
  }

  .to {
    color: #ffbc30;
  }

  .learn {
    color: #6bb141;
  }

  .logo-sub {
    margin-top: 4px;
    font-size: 34px;
    color: #555;
  }

  .menu {
    margin-bottom: 30px;
  }

  .menu h3 {
    margin: 0 0 10px;
    padding: 0 16px 2px;
    border-radius: 10px;
    background: #00643b;
    color: #fff;
    font-size: 32px;
    font-weight: 400;
    line-height: 60px;
  }

  .menu ul {
    margin: 0;
    padding: 0;
    list-style: none;
    font-size: 27px;
    line-height: 44px;
  }

  .menu li {
    display: flex;
    align-items: center;
  }

  .menu li::before {
    content: '';
    width: 10px;
    height: 10px;
    margin: 0 24px 0 6px;
    border-radius: 50%;
    background: #333;
  }

  .menu a {
    color: #00643b;
  }

  .content {
    min-width: 0;
    display: flex;
    flex-direction: column;
    padding-top: 40px;
  }

  .page-tabs {
    display: flex;
    gap: 4px;
    height: 82px;
    flex-shrink: 0;
    border-bottom: 2px solid #ddd;
  }

  .tab {
    height: 82px;
    padding: 0 30px;
    border: 2px solid transparent;
    border-radius: 8px 8px 0 0;
    font-size: 25px;
    line-height: 76px;
  }

  .tab.active {
    border-color: #ddd;
    border-bottom-color: #fff;
    background: #fff;
    color: #555;
  }

  .actions {
    display: flex;
    height: 46px;
    margin: 8px 0 0 auto;
    font-size: 23px;
    line-height: 40px;
  }

  .create {
    padding: 0 10px;
    border: 2px solid #ccc;
    border-right: 0;
    border-radius: 6px 0 0 6px;
    background: #fff;
  }

  .create-source {
    display: flex;
    align-items: center;
    gap: 6px;
    padding: 0 10px;
    border: 2px solid #4cae4c;
    border-radius: 0 6px 6px 0;
    background: #5cb85c;
    color: #fff;
    font-weight: 500;
  }

  .create-source svg {
    width: 26px;
    height: 24px;
  }

  .intro {
    margin: 28px 0 22px;
  }

  .warning {
    padding: 16px 34px 38px;
    border: 2px solid #fae199;
    background: #fdf0d2;
    color: #705000;
  }

  .warning a {
    font-weight: 500;
  }

  .editor {
    flex: 1;
    min-height: 0;
    display: flex;
    flex-direction: column;
    margin: 36px 0 0 2px;
    border-top: 2px solid #ebebeb;
  }

  .edit-tabs {
    display: flex;
    align-self: flex-start;
    border: 2px solid #bbb;
    border-width: 2px 0 0 2px;
    font-size: 31px;
    line-height: 80px;
  }

  .edit-tabs a {
    height: 86px;
    padding: 0 26px;
    border-right: 2px solid #bbb;
    border-bottom: 2px solid #bbb;
    background: #f3f3f3;
    color: #0645ad;
  }

  .edit-tabs a.active {
    position: relative;
    z-index: 1;
    border-bottom-color: transparent;
    background: #fff;
    color: #333;
  }

  .edit-body {
    flex: 1;
    min-height: 0;
    display: flex;
    flex-direction: column;
    margin-top: -2px;
    border-right: 2px solid #ebebeb;
  }

  .toolbar {
    display: flex;
    height: 70px;
    flex-shrink: 0;
    border: 2px solid #bbb;
    border-bottom: 0;
    background: linear-gradient(to bottom, #fff, #e8f2f8);
    box-shadow: inset 0 -4px #ddd;
    font-size: 31px;
    line-height: 60px;
  }

  .group {
    display: flex;
    align-items: center;
    height: 52px;
    margin: 6px 0 0;
    padding: 0 6px 0 14px;
    border-right: 2px solid #ddd;
  }

  .group + .group {
    padding-left: 16px;
  }

  .group.links {
    margin-right: 20px;
    border-right: 0;
  }

  .group svg {
    width: 44px;
    height: 44px;
    overflow: visible;
  }

  .section {
    display: flex;
    align-items: flex-start;
    margin-right: 36px;
    color: #0645ad;
  }

  .section.open {
    color: #333;
  }

  .arrow-down {
    margin: 28px 8px 0 0;
    border: 10px solid transparent;
    border-top-color: #777;
    border-bottom: 0;
  }

  .arrow-right {
    margin: 22px 15px 0 0;
    border: 10px solid transparent;
    border-left-color: #777;
    border-right: 0;
  }

  .switch {
    align-self: flex-start;
    margin: 5px 6px 0 auto;
  }

  .switch svg {
    width: 48px;
    height: 48px;
  }

  .toolbar.advanced {
    height: 66px;
    border-top: 0;
    border-bottom: 2px solid #bbb;
    background: #e0eef7;
    box-shadow: none;
  }

  .group.heading-group {
    padding: 0 12px 0 10px;
  }

  select {
    width: 154px;
    height: 44px;
    padding: 0 8px;
    border: 2px solid #bbb;
    border-radius: 0;
    appearance: none;
    background:
      conic-gradient(from -45deg at 50% 100%, #777 90deg, transparent 0) right 14px top 18px / 20px 10px no-repeat,
      #fff;
    background:
      linear-gradient(to bottom left, #777 50%, transparent 50%) right 24px top 18px / 10px 10px no-repeat,
      linear-gradient(to bottom right, #777 50%, transparent 50%) right 14px top 18px / 10px 10px no-repeat,
      #fff;
    color: #333;
    font: inherit;
    font-size: 23px;
    font-weight: 500;
    line-height: 40px;
  }

  .label {
    padding: 8px 36px 0 22px;
    color: #777;
    font-size: 23px;
    font-weight: 500;
    line-height: 44px;
  }

  .last {
    border-right: 0;
  }

  .find {
    margin-left: auto;
    padding-right: 4px;
    border-right: 0;
    border-left: 2px solid #ddd;
  }

  textarea {
    flex: 1;
    width: 100%;
    padding: 8px 2px;
    border: 2px solid #bbb;
    border-width: 0 2px;
    background: transparent;
    color: #333;
    font-family: 'Liberation Mono', 'Courier New', monospace;
    font-size: 27px;
    line-height: 32px;
    resize: none;
    outline: none;
  }

  .dock {
    position: relative;
    display: flex;
    flex-shrink: 0;
    height: 106px;
    margin: 14px 70px 0;
    padding: 0 6px;
    border-radius: 12px 12px 0 0;
    background: linear-gradient(to bottom, #c6c1c5, #e2dde1);
    box-shadow: 0 0 2px rgba(0, 0, 0, 0.4);
    font-family: Roboto, sans-serif;
  }

  .app {
    flex: 1;
    min-width: 0;
  }

  .app svg {
    width: 100%;
    height: 106px;
  }

  .divider {
    width: 2px;
    height: 78px;
    margin: 14px 17px 0 21px;
    background: #a3a0a4;
  }

  .petal {
    mix-blend-mode: multiply;
  }

  .serif {
    font-family: 'Liberation Serif', serif;
  }

  .num {
    font-family: 'Liberation Sans', sans-serif;
  }
</style>
